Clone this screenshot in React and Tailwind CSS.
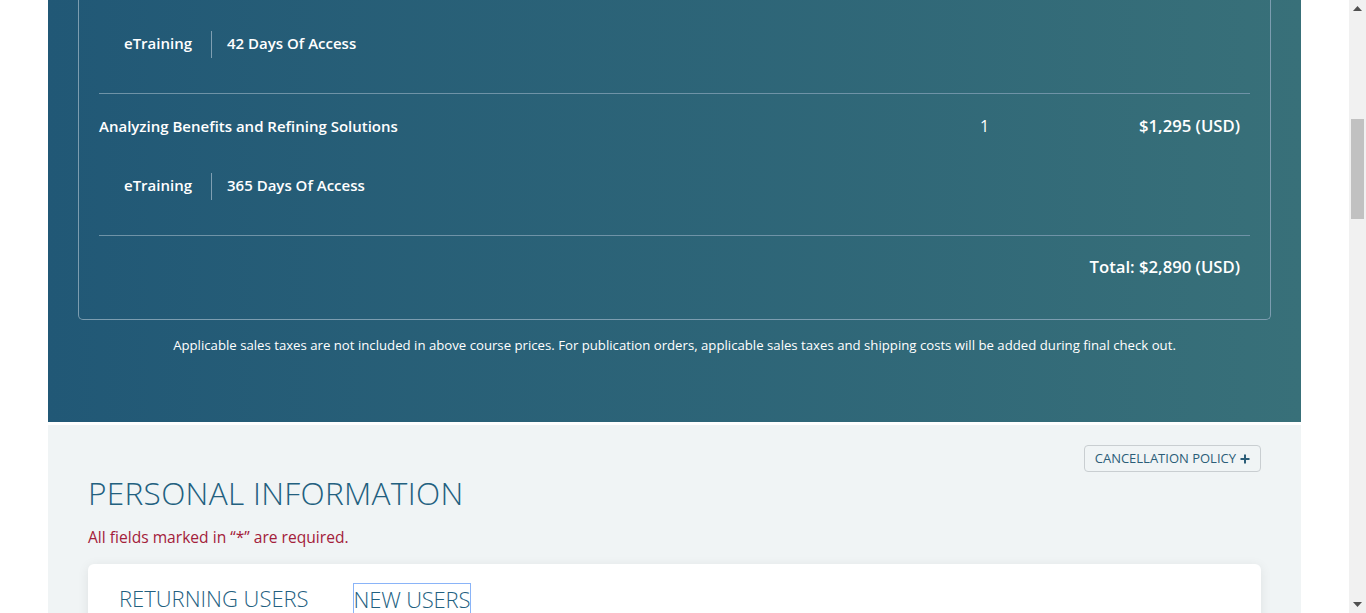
import React from "react";

function SubRow({ days, className = "" }) {
  return (
    <div className={"flex items-center h-[27px] pl-[25px] " + className}>
      <span className="text-[15px] font-semibold leading-none -mt-[2px]">eTraining</span>
      <span className="ml-[19px] mr-[15px] w-px h-[27px] bg-[#7f9fb2]" />
      <span className="text-[15px] font-semibold leading-none -mt-[2px]">{days}</span>
    </div>
  );
}

export default function App() {
  return (
    <div
      className="flex h-[613px] w-[1366px] overflow-hidden bg-white"
      style={{ fontFamily: '"Open Sans", "Liberation Sans", sans-serif' }}
    >
      <div className="flex-1 min-w-0">
        <div className="w-[1253px] mx-auto">
          {/* Dark order summary section */}
          <section className="h-[422px] bg-gradient-to-r from-[#215876] to-[#387079] text-white px-[30px] flex flex-col">
            <div className="border border-t-0 border-[#7c9db0] rounded-b-[5px] px-[20px]">
              <div className="h-[94px] pt-[31px] border-b border-[#6f93a7]">
                <SubRow days="42 Days Of Access" />
              </div>
              <div className="flex items-center h-[66px] pr-[10px]">
                <span className="flex-1 text-[15px] font-semibold -mt-[2px]">
                  Analyzing Benefits and Refining Solutions
                </span>
                <span className="w-[10px] text-[16px] mr-[149px] -mt-[2px]">1</span>
                <span className="text-[16.7px] font-semibold -mt-[2px]">$1,295 (USD)</span>
              </div>
              <div className="pt-[13px] pb-[35px] border-b border-[#6f93a7]">
                <SubRow days="365 Days Of Access" />
              </div>
              <div className="flex items-center justify-end h-[62px] pr-[10px]">
                <span className="text-[16.7px] font-semibold">Total: $2,890 (USD)</span>
              </div>
              <div className="h-[21px]" />
            </div>
            <p className="mt-[16px] text-[13.2px] leading-[18px] text-center">
              Applicable sales taxes are not included in above course prices. For
              publication orders, applicable sales taxes and shipping costs will be
              added during final check out.
            </p>
          </section>

          {/* Personal information section */}
          <section className="mt-[3px] h-[300px] bg-[#f0f4f5] px-[40px] pt-[20px]">
            <div className="flex justify-end">
              <button className="h-[27px] px-[10px] flex items-center gap-[4px] border border-[#c9ced1] rounded-[4px] text-[13px] text-[#2b5d78] bg-transparent">
                CANCELLATION POLICY
                <svg width="10" height="10" viewBox="0 0 10 10">
                  <path d="M5 0.5v9M0.5 5h9" stroke="#2b5d78" strokeWidth="2" />
                </svg>
              </button>
            </div>
            <h2 className="mt-[3px] text-[31.6px] leading-[36px] font-light text-[#22607f] tracking-[0.3px]">
              PERSONAL INFORMATION
            </h2>
            <p className="mt-[15px] text-[15.6px] leading-[22px] text-[#a3203a]">
              All fields marked in “*” are required.
            </p>
            <div className="mt-[16px] bg-white rounded-[6px] shadow-[0_2px_12px_rgba(0,0,0,0.08)] h-[200px] pl-[31px] pt-[19px]">
              <div className="flex items-start gap-[44px] text-[22px] leading-[28px] text-[#22607f] font-light">
                <span className="pt-[1px]">RETURNING USERS</span>
                <span className="border border-[#8ab4f8] pt-[1px] tracking-[-0.2px]">NEW USERS</span>
              </div>
            </div>
          </section>
        </div>
      </div>

      {/* Scrollbar */}
      <div className="w-[17px] h-full bg-[#f1f1f1] flex flex-col items-center">
        <div className="h-[17px] flex items-center justify-center">
          <svg width="9" height="5" viewBox="0 0 9 5">
            <path d="M4.5 0L9 5H0z" fill="#505050" />
          </svg>
        </div>
        <div className="mt-[102px] w-[13px] h-[100px] bg-[#c1c1c1]" />
        <div className="flex-1" />
        <div className="h-[17px] flex items-center justify-center">
          <svg width="9" height="5" viewBox="0 0 9 5">
            <path d="M0 0H9L4.5 5z" fill="#505050" />
          </svg>
        </div>
      </div>
    </div>
  );
}
